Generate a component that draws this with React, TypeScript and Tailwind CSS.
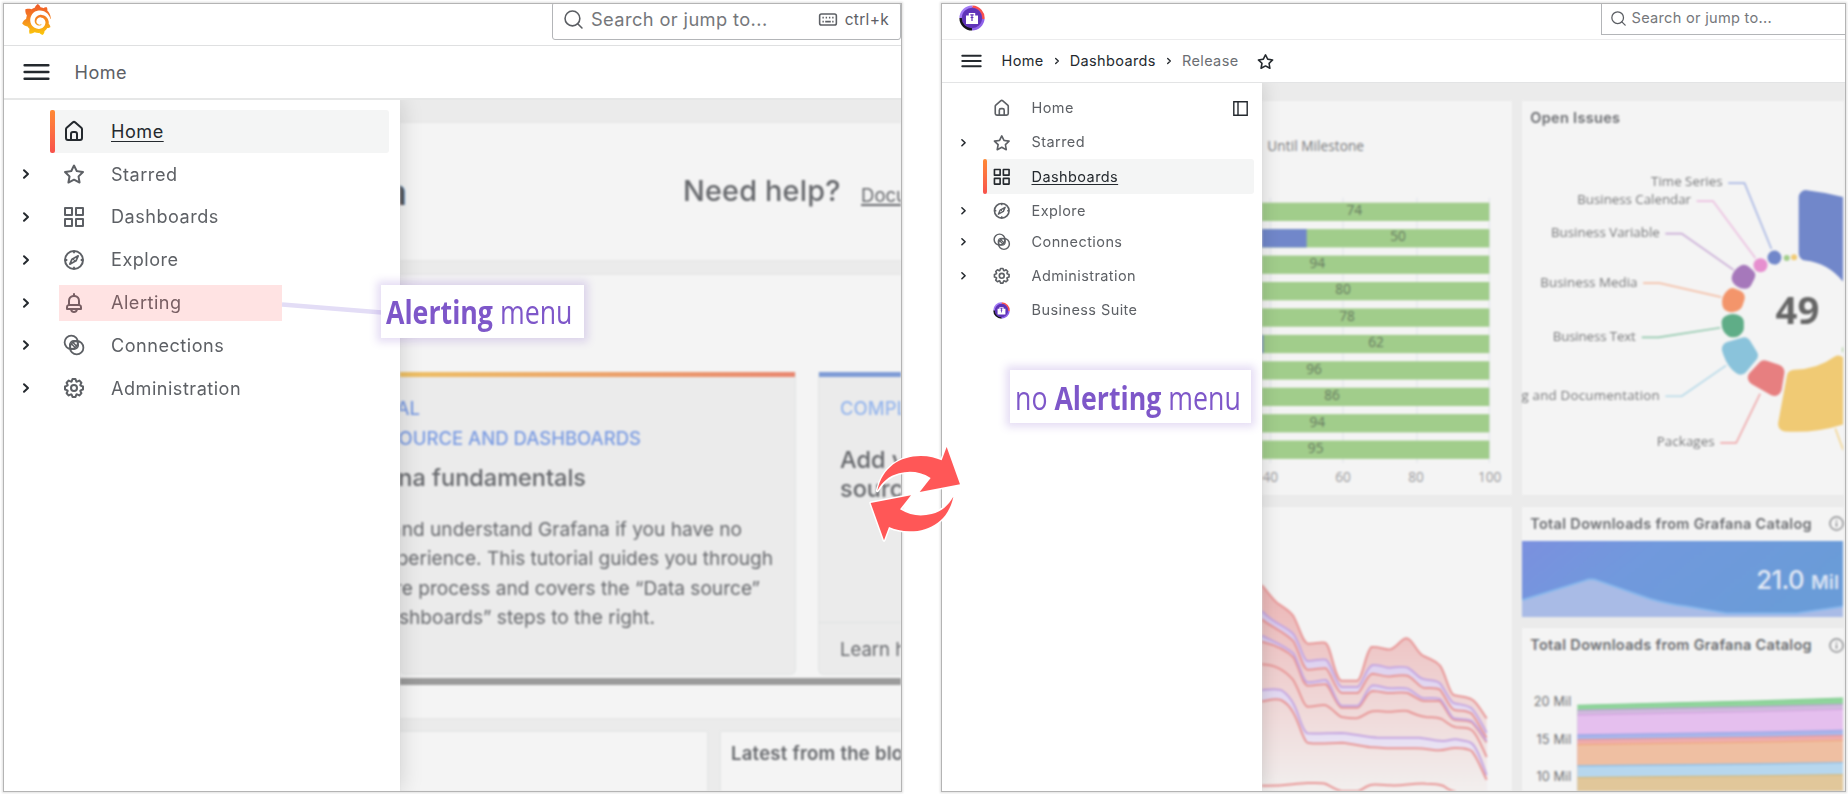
import React from "react";
import { SiGrafana } from "react-icons/si";

type IconName = "home" | "star" | "apps" | "compass" | "bell" | "connections" | "cog" | "suite";

const PATHS: Partial<Record<IconName, string>> = {
  home: "M20,8h0L14,2.74a3,3,0,0,0-4,0L4,8a3,3,0,0,0-1,2.26V19a3,3,0,0,0,3,3H18a3,3,0,0,0,3-3V10.25A3,3,0,0,0,20,8ZM14,20H10V15a1,1,0,0,1,1-1h2a1,1,0,0,1,1,1Zm5-1a1,1,0,0,1-1,1H16V15a3,3,0,0,0-3-3H11a3,3,0,0,0-3,3v5H6a1,1,0,0,1-1-1V10.25a1,1,0,0,1,.34-.75l6-5.25a1,1,0,0,1,1.32,0l6,5.25a1,1,0,0,1,.34.75Z",
  star: "M22,9.67A1,1,0,0,0,21.14,9l-5.69-.83L12.9,3a1,1,0,0,0-1.8,0L8.55,8.16,2.86,9a1,1,0,0,0-.81.68,1,1,0,0,0,.25,1l4.13,4-1,5.68A1,1,0,0,0,6.9,21.44L12,18.77l5.1,2.67a.93.93,0,0,0,.46.12,1,1,0,0,0,.59-.19,1,1,0,0,0,.4-1l-1-5.68,4.13-4A1,1,0,0,0,22,9.67Zm-6.15,4a1,1,0,0,0-.29.88l.72,4.2-3.76-2a1.06,1.06,0,0,0-.94,0l-3.76,2,.72-4.2a1,1,0,0,0-.29-.88l-3-3,4.21-.61a1,1,0,0,0,.76-.55L12,5.7l1.88,3.82a1,1,0,0,0,.76.55l4.21.61Z",
  apps: "M10,13H3a1,1,0,0,0-1,1v7a1,1,0,0,0,1,1h7a1,1,0,0,0,1-1V14A1,1,0,0,0,10,13ZM9,20H4V15H9ZM21,2H14a1,1,0,0,0-1,1v7a1,1,0,0,0,1,1h7a1,1,0,0,0,1-1V3A1,1,0,0,0,21,2ZM20,9H15V4h5Zm1,4H14a1,1,0,0,0-1,1v7a1,1,0,0,0,1,1h7a1,1,0,0,0,1-1V14A1,1,0,0,0,21,13Zm-1,7H15V15h5ZM10,2H3A1,1,0,0,0,2,3v7a1,1,0,0,0,1,1h7a1,1,0,0,0,1-1V3A1,1,0,0,0,10,2ZM9,9H4V4H9Z",
  bell: "M18,13.18V10a6,6,0,0,0-5-5.91V3a1,1,0,0,0-2,0V4.09A6,6,0,0,0,6,10v3.18A3,3,0,0,0,4,16v2a1,1,0,0,0,1,1H8.14a4,4,0,0,0,7.72,0H19a1,1,0,0,0,1-1V16A3,3,0,0,0,18,13.18ZM8,10a4,4,0,0,1,8,0v3H8Zm4,10a2,2,0,0,1-1.72-1h3.44A2,2,0,0,1,12,20Zm6-3H6V16a1,1,0,0,1,1-1H17a1,1,0,0,1,1,1Z",
  cog: "M21.32,9.55l-1.89-.63.89-1.78A1,1,0,0,0,20.13,6L18,3.87a1,1,0,0,0-1.15-.19l-1.78.89-.63-1.89A1,1,0,0,0,13.5,2h-3a1,1,0,0,0-.95.68L8.92,4.57,7.14,3.68A1,1,0,0,0,6,3.87L3.87,6a1,1,0,0,0-.19,1.15l.89,1.78-1.89.63A1,1,0,0,0,2,10.5v3a1,1,0,0,0,.68.95l1.89.63-.89,1.78A1,1,0,0,0,3.87,18L6,20.13a1,1,0,0,0,1.15.19l1.78-.89.63,1.89a1,1,0,0,0,.95.68h3a1,1,0,0,0,.95-.68l.63-1.89,1.78.89A1,1,0,0,0,18,20.13L20.13,18a1,1,0,0,0,.19-1.15l-.89-1.78,1.89-.63A1,1,0,0,0,22,13.5v-3A1,1,0,0,0,21.32,9.55ZM20,12.78l-1.2.4A2,2,0,0,0,17.64,16l.57,1.14-1.1,1.1L16,17.64a2,2,0,0,0-2.79,1.16l-.4,1.2H11.22l-.4-1.2A2,2,0,0,0,8,17.64l-1.14.57-1.1-1.1L6.36,16A2,2,0,0,0,5.2,13.18L4,12.78V11.22l1.2-.4A2,2,0,0,0,6.36,8L5.79,6.89l1.1-1.1L8,6.36A2,2,0,0,0,10.82,5.2l.4-1.2h1.56l.4,1.2A2,2,0,0,0,16,6.36l1.14-.57,1.1,1.1L17.64,8a2,2,0,0,0,1.16,2.79l1.2.4ZM12,8a4,4,0,1,0,4,4A4,4,0,0,0,12,8Zm0,6a2,2,0,1,1,2-2A2,2,0,0,1,12,14Z",
};

function SuiteLogo({ className }: { className: string }) {
  return (
    <svg viewBox="0 0 26 26" className={className}>
      <circle cx="13" cy="13" r="11" fill="#6a3cc4" />
      <g fill="none" strokeWidth="2.4">
        <path d="M1.6 13A11.4 11.4 0 0 1 13.5 1.6" stroke="#a27bf5" />
        <path d="M13.5 1.6A11.4 11.4 0 0 1 24.400 14" stroke="#f9504f" />
        <path d="M24.400 14A11.4 11.4 0 0 1 13 24.4" stroke="#8f63ea" />
        <path d="M13 24.4A11.4 11.4 0 0 1 1.6 13" stroke="#15131c" />
      </g>
      <circle cx="13" cy="13" r="9.8" fill="#5f33b8" />
      <path d="M7 10.500h2.800V8h6.4v2.500H19v8.500H7z" fill="#fff" />
      <path d="M11.3 9.800h3.400M13 9.500v6.500M11.600 12.500h2.800" stroke="#5f33b8" strokeWidth="1.2" fill="none" />
    </svg>
  );
}

function Icon({ name, className }: { name: IconName; className: string }) {
  if (name === "suite") return <SuiteLogo className={className} />;
  if (name === "compass")
    return (
      <svg viewBox="0 0 24 24" className={className} fill="none" stroke="currentColor" strokeWidth="2">
        <circle cx="12" cy="12" r="9" />
        <path d="M12 3v2.300M12 18.700V21M3 12h2.300M18.700 12H21" strokeWidth="1.800" />
        <path d="M16.200 7.800l-2.200 5-6.200 3.400 2.200-5z" strokeLinejoin="round" strokeWidth="1.700" />
        <path d="M10.600 10.600l2.800 2.800" strokeWidth="1.200" />
      </svg>
    );
  if (name === "connections")
    return (
      <svg viewBox="0 0 24 24" className={className} fill="none" stroke="currentColor" strokeWidth="1.800">
        <circle cx="9.300" cy="9.300" r="6.700" />
        <circle cx="14.700" cy="14.700" r="6.700" />
        <circle cx="12" cy="12" r="4.300" strokeWidth="1.500" />
        <path d="M10.200 8.800l5 5M8.800 10.200l5 5" strokeWidth="1.500" />
      </svg>
    );
  return (
    <svg viewBox="0 0 24 24" className={className} fill="currentColor">
      <path d={PATHS[name]} />
    </svg>
  );
}

function Chevron({ className }: { className: string }) {
  return (
    <svg viewBox="0 0 8 12" className={className} fill="none" stroke="currentColor" strokeWidth="2" strokeLinecap="round" strokeLinejoin="round">
      <path d="M2 2.200L6 6 2 9.800" />
    </svg>
  );
}

function Burger({ className }: { className: string }) {
  return (
    <svg viewBox="0 0 28 18" className={className} stroke="#24292e" strokeWidth="2.600" strokeLinecap="round">
      <path d="M1.700 2h24.600M1.700 9h24.600M1.700 16h24.600" />
    </svg>
  );
}

function SearchIcon({ className }: { className: string }) {
  return (
    <svg viewBox="0 0 18 18" className={className} fill="none" stroke="#5a5d62" strokeWidth="1.500" strokeLinecap="round">
      <circle cx="8" cy="8" r="7" />
      <path d="M13 13l4 4" />
    </svg>
  );
}

function InfoIcon() {
  return (
    <svg viewBox="0 0 16 16" className="size-[15px] shrink-0" fill="none" stroke="#77797c" strokeWidth="1.300">
      <circle cx="8" cy="8" r="7" />
      <path d="M8 7v4.500M8 4.300v1.400" />
    </svg>
  );
}

interface Item {
  icon: IconName;
  label: string;
  chevron?: boolean;
  active?: boolean;
  highlight?: boolean;
}

const LEFT_ITEMS: Item[] = [
  { icon: "home", label: "Home", active: true },
  { icon: "star", label: "Starred", chevron: true },
  { icon: "apps", label: "Dashboards", chevron: true },
  { icon: "compass", label: "Explore", chevron: true },
  { icon: "bell", label: "Alerting", chevron: true, highlight: true },
  { icon: "connections", label: "Connections", chevron: true },
  { icon: "cog", label: "Administration", chevron: true },
];

const RIGHT_ITEMS: Item[] = [
  { icon: "home", label: "Home" },
  { icon: "star", label: "Starred", chevron: true },
  { icon: "apps", label: "Dashboards", active: true },
  { icon: "compass", label: "Explore", chevron: true },
  { icon: "connections", label: "Connections", chevron: true },
  { icon: "cog", label: "Administration", chevron: true },
  { icon: "suite", label: "Business Suite" },
];

function LeftNav() {
  return (
    <nav className="relative z-10 w-[396px] shrink-0 bg-white pt-[10px] shadow-[0_0_22px_rgba(0,0,0,0.16)]">
      {LEFT_ITEMS.map((it) => (
        <div key={it.label} className="flex h-[42.800px] items-center">
          <div className="flex w-[46px] pl-[18px]">{it.chevron && <Chevron className="h-[12px] w-[8px] text-[#24292e]" />}</div>
          <div className={it.active ? "relative flex h-full w-[339px] items-center rounded-[3px] bg-[#f4f5f5] text-[#24292e]" : "relative flex h-full w-[339px] items-center text-[#5d6065]"}>
            {it.active && <span className="absolute inset-y-0 left-0 w-[5px] rounded-[2px] bg-linear-to-b from-[#ff8833] to-[#f8514b]" />}
            <Icon name={it.icon} className="ml-[12px] size-[24px]" />
            <span className={it.active ? "ml-[25px] text-[18.100px] tracking-[0.500px] underline underline-offset-[3px]" : "ml-[25px] text-[18.100px] tracking-[0.500px]"}>{it.label}</span>
            {it.highlight && <span className="absolute top-[4px] left-[9px] h-[36px] w-[223px] bg-[#ff5a5a]/17" />}
          </div>
        </div>
      ))}
    </nav>
  );
}

function RightNav() {
  return (
    <nav className="relative z-10 w-[320px] shrink-0 bg-white pt-[8px] shadow-[0_0_18px_rgba(0,0,0,0.16)]">
      {RIGHT_ITEMS.map((it) => (
        <div key={it.label} className={it.icon === "connections" ? "-mt-[3px] flex h-[34.200px] items-center" : "flex h-[34.200px] items-center"}>
          <div className="flex w-[41px] pl-[18px]">{it.chevron && <Chevron className="h-[9.500px] w-[7px] text-[#24292e]" />}</div>
          <div className={it.active ? "relative flex h-full w-[271px] items-center rounded-[3px] bg-[#f4f5f5] text-[#24292e]" : "relative flex h-full w-[271px] items-center text-[#5d6065]"}>
            {it.active && <span className="absolute inset-y-0 left-0 w-[4.500px] rounded-[2px] bg-linear-to-b from-[#ff8833] to-[#f8514b]" />}
            <span className="ml-[9px] flex w-[20px] justify-center">
              <Icon name={it.icon} className={it.icon === "suite" ? "size-[17px]" : "size-[19.500px]"} />
            </span>
            <span className={it.active ? "ml-[20px] text-[14.500px] tracking-[0.420px] underline underline-offset-2" : "ml-[20px] text-[14.500px] tracking-[0.420px]"}>{it.label}</span>
            {it.label === "Home" && (
              <svg viewBox="0 0 15 15" className="mr-[6px] ml-auto size-[15px]" fill="none" stroke="#24292e" strokeWidth="1.400">
                <path d="M.8.800h13.400v13.400H.8zM5 .8v13.400" />
              </svg>
            )}
          </div>
        </div>
      ))}
    </nav>
  );
}

function HomeContent() {
  return (
    <div className="min-w-0 flex-1 overflow-hidden bg-[#ebebeb]">
      <div className="flex h-full w-[501px] flex-col overflow-hidden text-[#66686c] blur-[0.800px]">
        <div className="mt-[22px] flex h-[139px] shrink-0 items-center border-y border-[#e6e7e7] bg-[#f4f4f4]">
          <div className="flex w-[7px] shrink-0 justify-end overflow-hidden text-[37px] font-semibold text-[#55575b]">a</div>
          <div className="ml-[276px] text-[28.800px] leading-none font-medium tracking-[0.200px] whitespace-nowrap">Need help?</div>
          <div className="mt-[9px] ml-[20.500px] text-[18.500px] whitespace-nowrap underline decoration-2 underline-offset-[2px]">Documentation</div>
        </div>
        <div className="mt-[13px] flex h-[445px] shrink-0 flex-col border-y border-[#e6e7e7] bg-[#f4f4f4]">
          <div className="mt-[97px] flex h-[303px] shrink-0">
            <div className="flex w-[396px] shrink-0 flex-col rounded-b-md border-r border-b border-[#e2e5e5] bg-[#ebebeb]">
              <div className="h-[5px] bg-linear-to-r from-[#edc065] to-[#e98770]" />
              <div className="pt-[17px] text-[18.500px] leading-[29.500px] font-medium text-[#7a9be2]">
                <div className="flex w-[20px] justify-end">TUTORIAL</div>
                <div className="flex w-[241px] justify-end whitespace-nowrap">DATA SOURCE AND DASHBOARDS</div>
              </div>
              <div className="mt-[7px] flex w-[186px] justify-end text-[23.500px] leading-[36px] font-medium whitespace-nowrap">Grafana fundamentals</div>
              <div className="mt-[19px] text-[19.100px] leading-[29.400px] whitespace-nowrap">
                <div className="flex w-[342px] justify-end">Set up and understand Grafana if you have no</div>
                <div className="flex w-[373px] justify-end">prior experience. This tutorial guides you through</div>
                <div className="flex w-[360px] justify-end">the entire process and covers the “Data source”</div>
                <div className="flex w-[255px] justify-end">and “Dashboards” steps to the right.</div>
              </div>
            </div>
            <div className="ml-[22px] flex w-[200px] shrink-0 flex-col rounded-bl-md border-b border-l border-[#e2e5e5] bg-[#ebebeb]">
              <div className="h-[5px] bg-[#7f9cd6]" />
              <div className="mt-[17px] ml-[21px] text-[18.500px] leading-[29.500px] font-medium text-[#96b6ec]">COMPLETE</div>
              <div className="mt-[21px] ml-[21px] text-[23.500px] leading-[29px] font-medium whitespace-nowrap">
                Add your data
                <br />
                source
              </div>
              <div className="mt-[119px] border-t border-[#dfe2e2] pt-[11px] pl-[21px] text-[18.500px] leading-[30px]">Learn how</div>
            </div>
          </div>
          <div className="mt-[3px] h-[7px] shrink-0 bg-[#9b9b9b]" />
        </div>
        <div className="mt-[12px] flex flex-1 gap-[12px]">
          <div className="w-[308px] shrink-0 border-t border-r border-[#e4e6e6] bg-[#f4f4f4]" />
          <div className="w-[300px] shrink-0 border-t border-l border-[#e4e6e6] bg-[#f4f4f4] pt-[8px] pl-[10px] text-[18.500px] leading-[26px] font-semibold tracking-[0.250px] whitespace-nowrap">Latest from the blog</div>
        </div>
      </div>
    </div>
  );
}

const BARS: [number, number][] = [
  [74, 315], [50, 446], [94, 204], [80, 281], [78, 293], [62, 380], [96, 194], [86, 248], [94, 204], [95, 199],
];

function MilestoneChart() {
  return (
    <svg viewBox="38 122 749 1182" className="h-full w-[249.700px]" fontFamily="'Open Sans', sans-serif">
      <text x="54" y="272" fontSize="41" fill="#77787a" textLength="290">Until Milestone</text>
      {[63, 281, 503, 720].map((x) => (
        <path key={x} d={`M${x} 412V1208`} stroke="#e0e3ea" strokeWidth="3" />
      ))}
      {BARS.map(([v, x], i) => (
        <g key={i}>
          <rect x="30" y={427 + i * 79.3} width="690" height="55" fill="#a1cd8b" />
          {v === 50 && <rect x="30" y={427 + i * 79.3} width="142" height="55" fill="#7187ca" />}
          {v === 62 && <rect x="36" y={427 + i * 79.3} width="6" height="55" fill="#7187ca" />}
          <text x={x} y={463 + i * 79.500} fontSize="41" fill="#66795f" textAnchor="middle">{v}</text>
        </g>
      ))}
      <g fontSize="41" fill="#9a9a9c" textAnchor="middle">
        <text x="63" y="1264">40</text>
        <text x="281" y="1264">60</text>
        <text x="500" y="1264">80</text>
        <text x="721" y="1264">100</text>
      </g>
    </svg>
  );
}

const AREA = {
  top: "M38 282C60 310 70 325 85 337C110 355 120 357 133 377C155 420 160 455 176 458C200 458 210 452 227 455C245 460 255 565 276 569H324C340 565 350 475 367 468C390 465 405 478 424 475C445 468 455 442 472 442C490 445 500 480 519 493C545 507 555 505 572 524C590 550 598 605 613 612C635 618 650 615 667 625C685 635 695 660 712 682",
  l1: "M38 360C70 398 110 405 133 430C155 465 160 505 174 510C200 510 210 503 230 506C245 515 260 583 277 588H325C340 580 350 530 369 522C400 520 405 532 424 530C445 528 460 525 475 530C500 545 505 560 522 564C545 570 560 565 572 577C590 600 600 630 613 636C635 642 650 640 667 652C685 670 700 705 712 725",
  l2: "M38 385C60 405 110 425 133 452C155 495 160 532 174 536C200 536 215 530 230 532C245 545 260 603 277 606H325C340 600 350 552 369 548C390 550 405 558 424 556C445 553 460 550 475 554C500 568 505 585 522 590C545 592 560 588 572 596C590 620 600 650 613 656C635 662 650 656 667 668C685 690 700 725 712 740",
  l3: "M38 434C70 450 110 465 133 488C155 530 160 570 174 574C200 574 215 566 230 567C245 575 260 640 277 644H325C340 640 350 590 369 583C395 584 405 592 424 592C445 592 460 588 475 593C500 605 505 618 522 622C545 620 560 620 572 624C590 640 600 675 613 682C635 687 650 683 667 690C685 705 700 735 712 750",
  l4: "M38 452C70 460 110 475 133 500C155 545 160 580 174 584C200 584 215 578 230 580C245 590 260 645 277 650H325C340 645 350 605 369 600C395 601 405 606 424 606C445 605 460 602 475 606C500 618 505 626 522 630H572C590 650 600 682 613 686C635 690 650 686 667 694C685 712 700 740 712 754",
  l5: "M38 520C80 522 105 538 130 565C155 605 160 644 174 647C200 646 215 640 230 643C250 652 265 675 277 678C300 682 310 683 325 681C340 677 350 665 369 661C400 658 405 664 424 662C445 660 460 658 475 660C500 672 515 676 530 678C550 680 560 678 577 684C595 695 600 705 620 709C645 713 650 706 667 717C685 730 700 775 712 798",
  l6: "M38 597C60 597 85 590 100 600C150 635 150 715 174 727C210 728 240 726 277 726C310 728 350 738 385 740H510C530 742 555 750 580 750C600 750 605 744 620 745C645 750 655 748 667 757C685 770 700 820 712 852",
  l7: "M38 631C55 630 75 620 95 627C145 650 155 745 174 755C210 762 240 755 277 755C310 758 350 768 369 769C400 770 405 772 424 772H500C530 772 550 778 570 778C595 776 600 770 620 771C645 772 655 772 667 780C685 800 700 845 712 866",
  l8: "M38 884C100 886 130 878 174 876C200 877 215 875 230 879C250 890 265 899 277 900H325C340 898 350 882 369 881C400 880 410 884 424 883C460 885 490 876 530 878C560 878 570 880 583 885C595 895 605 900 620 902",
};

function AreaChart() {
  const close = "V900H38Z";
  const red = "#e89696";
  const violet = "#c5a6e0";
  return (
    <svg viewBox="38 48 749 852" className="h-full w-[249.700px]" fill="none" strokeWidth="6" strokeLinejoin="round">
      <defs>
        <linearGradient id="area-red" x1="0" y1="280" x2="0" y2="900" gradientUnits="userSpaceOnUse">
          <stop offset="0" stopColor="#ecb5b5" />
          <stop offset="0.500" stopColor="#efd3d3" />
          <stop offset="1" stopColor="#f2efee" />
        </linearGradient>
        <linearGradient id="area-violet" x1="0" y1="360" x2="0" y2="800" gradientUnits="userSpaceOnUse">
          <stop offset="0" stopColor="#d8caee" />
          <stop offset="1" stopColor="#eae4f4" />
        </linearGradient>
      </defs>
      <path d={AREA.top + close} fill="url(#area-red)" />
      <path d={AREA.l1 + close} fill="url(#area-violet)" />
      <path d={AREA.l2 + close} fill="url(#area-red)" />
      <path d={AREA.l3 + close} fill="url(#area-violet)" />
      <path d={AREA.l4 + close} fill="url(#area-red)" />
      <path d={AREA.l6 + close} fill="url(#area-violet)" />
      <path d={AREA.l7 + close} fill="url(#area-red)" />
      <g stroke={red}>
        <path d={AREA.top} /><path d={AREA.l2} /><path d={AREA.l4} /><path d={AREA.l5} /><path d={AREA.l7} /><path d={AREA.l8} />
      </g>
      <g stroke={violet}>
        <path d={AREA.l1} /><path d={AREA.l3} /><path d={AREA.l6} />
      </g>
    </svg>
  );
}

const LABELS: [string, number, number, number, string, string][] = [
  ["Time Series", 454, 557, 215, "#aab8e4", "M686 547H735L816 745"],
  ["Business Calendar", 232, 611, 342, "#ecbfe0", "M591 601H640L768 773"],
  ["Business Variable", 153, 709, 327, "#c9abd6", "M497 699H546L702 808"],
  ["Business Media", 121, 859, 292, "#f4c0a8", "M430 848H480L665 890"],
  ["Business Text", 158, 1021, 250, "#93c9ae", "M426 1011H476L662 982"],
  ["g and Documentation", 64, 1199, 416, "#b5d9e8", "M497 1188H546L680 1095"],
  ["Packages", 471, 1338, 174, "#efabad", "M662 1328H710L782 1180"],
];

function IssuesChart() {
  return (
    <svg viewBox="67 300 965 1185" className="h-full w-[321.700px]" fontFamily="'Open Sans', sans-serif">
      {LABELS.map(([t, x, y, w, c, d]) => (
        <g key={t}>
          <text x={x} y={y} fontSize="40" fill="#77787a" textLength={w}>{t}</text>
          <path d={d} stroke={c} strokeWidth="5" fill="none" />
        </g>
      ))}
      <path d="M1008 1285L1032 1350" stroke="#f3d692" strokeWidth="5" />
      <g strokeLinejoin="round" strokeWidth="44">
        <path d="M920 590Q1010 600 1100 635V920Q1040 770 920 758Z" fill="#7187ca" stroke="#7187ca" />
        <path d="M884 1130Q960 1130 1017 1088L1090 1130V1225Q980 1280 858 1272Z" fill="#f0ca74" stroke="#f0ca74" />
        <path d="M795 1102L833 1115L825 1165L767 1132Z" fill="#e77f80" stroke="#e77f80" />
        <path d="M689 1046L733 1033L753 1065L723 1101Q700 1085 689 1046Z" fill="#8ac3db" stroke="#8ac3db" />
        <path d="M688 966Q700 960 711 966V982Q706 990 697 988Q688 982 688 966Z" fill="#5fad87" stroke="#5fad87" />
        <path d="M699 885L714 891L708 909Q700 916 690 911Q687 895 699 885Z" fill="#f3956b" stroke="#f3956b" />
        <path d="M733 815L745 825L736 843Q724 842 718 833Q722 821 733 815Z" fill="#a678bb" stroke="#a678bb" />
      </g>
      <circle cx="783" cy="794" r="21" fill="#e68fcf" />
      <circle cx="825" cy="771" r="21" fill="#7187ca" />
      <circle cx="862" cy="772" r="9" fill="#a1cd8b" />
      <circle cx="884" cy="770" r="9" fill="#f0ca74" />
      <circle cx="1044" cy="1048" r="16" fill="#a1cd8b" />
      <text x="894" y="972" fontSize="115" fontWeight="700" fill="#666" textAnchor="middle" textLength="132">49</text>
    </svg>
  );
}

function StatChart() {
  return (
    <svg viewBox="67 149 965 230" className="h-[76.700px] w-[321.700px] shrink-0" fontFamily="Inter, sans-serif">
      <defs>
        <linearGradient id="stat" x1="0" y1="0" x2="1" y2="0.300">
          <stop offset="0" stopColor="#7b90df" />
          <stop offset="0.400" stopColor="#7199dd" />
          <stop offset="1" stopColor="#6a9cd8" />
        </linearGradient>
      </defs>
      <rect x="67" y="149" width="965" height="230" fill="url(#stat)" />
      <path d="M67 326L255 268Q274 260 295 268L450 322Q500 337 560 345L680 365H890L1032 345V379H67Z" fill="#a9bbe6" />
      <path d="M67 326L255 268Q274 260 295 268L450 322Q500 337 560 345L680 366H890L1032 345" fill="none" stroke="#86b6ec" strokeWidth="6" />
      <text x="770" y="292" fontSize="77" fontWeight="500" fill="#e4eaf5" textLength="145">21.0</text>
      <text x="934" y="292" fontSize="58" fontWeight="600" fill="#dbe4f4" textLength="84">Mil</text>
    </svg>
  );
}

const BANDS: [number, number, string, string][] = [
  [642, 620, "#90d49c", "#84cf92"],
  [657, 639, "#d0bbdd", "#bda4d2"],
  [671, 654, "#e5bfee", "#d6a8e2"],
  [731, 717, "#a9b6ea", "#9ea6e6"],
  [746, 733, "#efaeae", "#ec9a9d"],
  [760, 747, "#efbfa2", "#f0a97f"],
  [824, 814, "#b7d7ee", "#8fbfe8"],
  [859, 850, "#e1c79a", "#d3bb83"],
];

function CatalogChart() {
  return (
    <svg viewBox="67 500 965 400" className="h-[133.300px] w-[321.700px] shrink-0" fontFamily="Inter, sans-serif">
      {BANDS.map(([l, r, fill, stroke]) => (
        <g key={l}>
          <path d={`M233 ${l}L500 ${l - (l - r) * 0.3}L780 ${l - (l - r) * 0.600}L1040 ${r}V910H233Z`} fill={fill} />
          <path d={`M233 ${l}L500 ${l - (l - r) * 0.3}L780 ${l - (l - r) * 0.600}L1040 ${r}`} fill="none" stroke={stroke} strokeWidth="4" />
        </g>
      ))}
      <g fontSize="38" fill="#707275" textAnchor="end">
        <text x="215" y="644" textLength="113">20 Mil</text>
        <text x="215" y="757" textLength="105">15 Mil</text>
        <text x="215" y="869" textLength="105">10 Mil</text>
      </g>
    </svg>
  );
}

function PanelTitle({ children, info }: { children: React.ReactNode; info?: boolean }) {
  return (
    <div className="flex h-[34px] w-[330px] shrink-0 items-center pl-[8.500px] text-[14.500px] font-semibold whitespace-nowrap text-[#6a6c70]">
      <span className="w-[299px] tracking-[0.320px]">{children}</span>
      {info && <InfoIcon />}
    </div>
  );
}

function DashboardContent() {
  return (
    <div className="min-w-0 flex-1 overflow-hidden bg-[#ebebeb]">
      <div className="flex h-full w-[583px] gap-[10px] overflow-hidden pt-[18px] pl-[0.500px] blur-[0.800px]">
        <div className="flex w-[249.700px] shrink-0 flex-col gap-[12px]">
          <div className="h-[394px] shrink-0 bg-[#f4f4f4]">
            <MilestoneChart />
          </div>
          <div className="h-[284px] shrink-0 bg-[#f4f4f4]">
            <AreaChart />
          </div>
        </div>
        <div className="flex w-[322px] shrink-0 flex-col">
          <div className="relative h-[394px] shrink-0 bg-[#f4f4f4]">
            <IssuesChart />
            <div className="absolute top-0 left-0">
              <PanelTitle>Open Issues</PanelTitle>
            </div>
          </div>
          <div className="mt-[11.500px] flex h-[110.500px] shrink-0 flex-col overflow-hidden bg-[#f4f4f4]">
            <PanelTitle info>Total Downloads from Grafana Catalog</PanelTitle>
            <StatChart />
          </div>
          <div className="mt-[10.500px] flex h-[164px] shrink-0 flex-col overflow-hidden bg-[#f4f4f4]">
            <div className="flex h-[30px] shrink-0 items-center pt-[5px]">
              <PanelTitle info>Total Downloads from Grafana Catalog</PanelTitle>
            </div>
            <CatalogChart />
          </div>
        </div>
      </div>
    </div>
  );
}

export default function App() {
  return (
    <div className="relative flex h-[794px] w-[1848px] overflow-hidden bg-white pt-[3px] pl-[3px] font-['Inter',sans-serif]">
      <section className="flex h-[789px] w-[899px] shrink-0 flex-col overflow-hidden border border-[#b4b4b4] bg-white shadow-[0_0_2px_1px_rgba(0,0,0,0.12)]">
        <header className="flex h-[42px] shrink-0 items-start border-b border-[#dfe0e1]">
          <svg className="size-0" aria-hidden="true">
            <linearGradient id="flame" x1="0" y1="0" x2="0" y2="1">
              <stop offset="0" stopColor="#f05a28" />
              <stop offset="0.400" stopColor="#f47b24" />
              <stop offset="1" stopColor="#fbca0a" />
            </linearGradient>
          </svg>
          <SiGrafana className="ml-[17px] size-[31px] fill-[url(#flame)]" />
          <div className="-mt-[2px] ml-auto flex h-[38px] w-[349px] items-center rounded-[3px] border border-[#b3b5b8] pb-[3px]">
            <SearchIcon className="ml-[11px] size-[19px]" />
            <span className="ml-[8px] text-[18.300px] tracking-[0.380px] text-[#75777b]">Search or jump to...</span>
            <svg viewBox="0 0 20 14" className="ml-auto h-[13px] w-[20px]" fill="none" stroke="#5d6065" strokeWidth="1.700">
              <rect x="1" y="1" width="18" height="12" rx="2" />
              <path d="M4 5h1.500M7.500 5H9M11 5h1.500M14.500 5H16M4 9.200h1.500M7 9.200h6M14.500 9.200H16" strokeWidth="1.800" />
            </svg>
            <span className="mr-[11px] ml-[7px] text-[15.500px] tracking-[0.300px] text-[#5d6065]">ctrl+k</span>
          </div>
        </header>
        <div className="flex h-[54px] shrink-0 items-center border-b-2 border-[#e6e7e7]">
          <Burger className="ml-[18.500px] h-[18px] w-[27px]" />
          <span className="mt-[1px] ml-[25px] text-[18.100px] tracking-[0.480px] text-[#5d6065]">Home</span>
        </div>
        <div className="flex min-h-0 flex-1 overflow-hidden">
          <LeftNav />
          <HomeContent />
        </div>
      </section>

      <section className="ml-[38.500px] flex h-[789px] w-[905px] shrink-0 flex-col overflow-hidden border border-[#b4b4b4] bg-white shadow-[0_0_2px_1px_rgba(0,0,0,0.12)]">
        <header className="flex h-[36px] shrink-0 items-start border-b border-[#ececed]">
          <SuiteLogo className="mt-[1px] ml-[17px] size-[26px]" />
          <div className="-mt-[2px] ml-auto flex h-[33px] w-[244px] items-center border-b border-l border-[#b3b5b8] pt-[1px]">
            <SearchIcon className="ml-[9px] size-[15px]" />
            <span className="ml-[6px] text-[14.600px] tracking-[0.280px] text-[#75777b]">Search or jump to...</span>
          </div>
        </header>
        <div className="flex h-[43px] shrink-0 items-center border-b border-[#e3e4e5] text-[14.500px] tracking-[0.380px] text-[#24292e]">
          <Burger className="ml-[19px] h-[14px] w-[21px]" />
          <span className="ml-[20px]">Home</span>
          <Chevron className="mx-[10px] h-[8px] w-[6px]" />
          <span>Dashboards</span>
          <Chevron className="mx-[10px] h-[8px] w-[6px]" />
          <span className="text-[#6b6e73]">Release</span>
          <Icon name="star" className="ml-[17px] size-[19px]" />
        </div>
        <div className="flex min-h-0 flex-1 overflow-hidden">
          <RightNav />
          <DashboardContent />
        </div>
      </section>

      <svg viewBox="0 0 100 16" className="absolute top-[300px] left-[282px] z-20 h-[16px] w-[100px]">
        <path d="M0 4.500L100 12.500" stroke="#e3ddf6" strokeWidth="4.500" />
      </svg>
      <div className="absolute top-[285px] left-[381px] z-20 flex h-[53px] w-[203px] items-center bg-white pl-[5px] font-['Open_Sans',sans-serif] text-[#7e57c9] shadow-[0_0_8px_4px_rgba(126,87,201,0.200)]">
        <span className="origin-left scale-x-[0.810] text-[33px] leading-none whitespace-nowrap">
          <b>Alerting</b> menu
        </span>
      </div>
      <div className="absolute top-[370px] left-[1010px] z-20 flex h-[53px] w-[241px] items-center bg-white pt-[2px] pl-[5px] font-['Open_Sans',sans-serif] text-[#7e57c9] shadow-[0_0_8px_4px_rgba(126,87,201,0.200)]">
        <span className="origin-left scale-x-[0.810] text-[33px] leading-none whitespace-nowrap">
          no <b>Alerting</b> menu
        </span>
      </div>

      <svg viewBox="54 279 285 303" className="absolute top-[443px] left-[868px] z-20 h-[101px] w-[95px]" fill="#ff5757" stroke="#fff" strokeWidth="9" strokeLinejoin="round" paintOrder="stroke">
        <path d="M82 422C96 352 150 318 212 318C238 318 258 324 275 331L290 291L330 403L209 426L242 384C210 364 178 362 147 370C116 378 97 396 82 422Z" />
        <path transform="rotate(180 196 431)" d="M82 422C96 352 150 318 212 318C238 318 258 324 275 331L290 291L330 403L209 426L242 384C210 364 178 362 147 370C116 378 97 396 82 422Z" />
      </svg>
    </div>
  );
}
